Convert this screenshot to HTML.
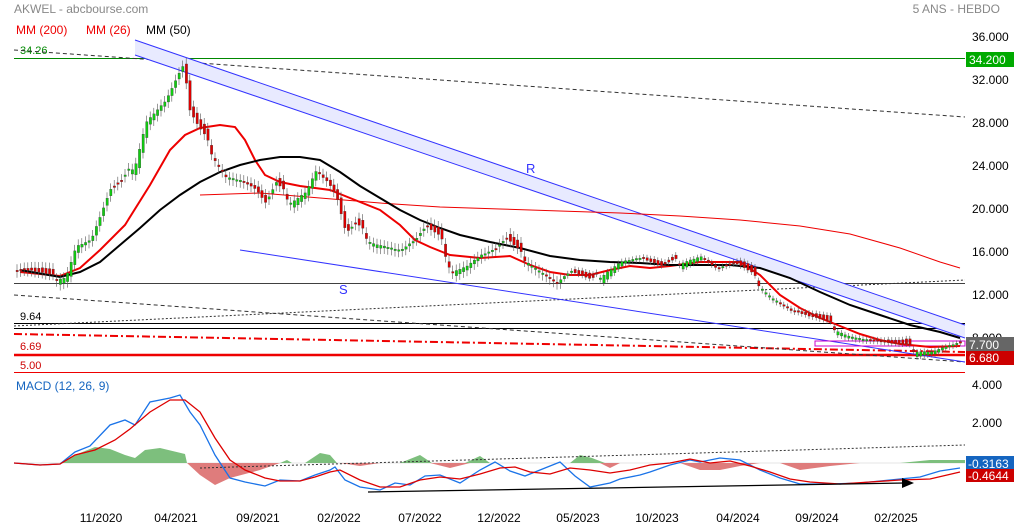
<!DOCTYPE html>
<html><head><meta charset="utf-8"><style>
html,body{margin:0;padding:0;background:#fff;width:1014px;height:528px;overflow:hidden;font-family:"Liberation Sans",sans-serif}
</style></head><body>
<svg id="s" width="1014" height="528" xmlns="http://www.w3.org/2000/svg" font-family="Liberation Sans, sans-serif">
<text x="14" y="13" font-size="12" fill="#888">AKWEL - abcbourse.com</text>
<text x="1000" y="13" font-size="12" fill="#888" text-anchor="end">5 ANS - HEBDO</text>
<text x="16" y="34" font-size="12" fill="#e00">MM (200)</text>
<text x="86" y="34" font-size="12" fill="#e00">MM (26)</text>
<text x="146" y="34" font-size="12" fill="#000">MM (50)</text>
<text x="20" y="54" font-size="11" fill="#080">34.26</text>
<g font-size="12" fill="#000">
<text x="972" y="41">36.000</text><text x="972" y="84">32.000</text><text x="972" y="127">28.000</text>
<text x="972" y="170">24.000</text><text x="972" y="213">20.000</text><text x="972" y="256">16.000</text>
<text x="972" y="299">12.000</text><text x="972" y="342">8.000</text>
<text x="972" y="389">4.000</text><text x="972" y="427">2.000</text>
</g>
<rect x="966" y="52" width="48" height="15" fill="#0a0"/><text x="969" y="64" font-size="12" fill="#fff">34.200</text>
<rect x="966" y="337" width="48" height="15" fill="#666"/><text x="969" y="349" font-size="12" fill="#fff">7.700</text>
<rect x="966" y="351" width="48" height="14" fill="#c00"/><text x="969" y="362" font-size="12" fill="#fff">6.680</text>
<rect x="966" y="456" width="48" height="15" fill="#1565c0"/><text x="968" y="468" font-size="12" fill="#fff">-0.3163</text>
<rect x="966" y="469" width="48" height="13" fill="#c00"/><text x="968" y="480" font-size="12" fill="#fff">-0.4644</text>
<line x1="14" y1="58.5" x2="965" y2="58.5" stroke="#080" stroke-width="1"/>
<line x1="14" y1="283.5" x2="965" y2="283.5" stroke="#000" stroke-width="0.8"/>
<text x="20" y="320" font-size="11">9.64</text>
<line x1="14" y1="323.5" x2="965" y2="323.5" stroke="#000"/>
<line x1="14" y1="328.5" x2="965" y2="328.5" stroke="#000"/>
<text x="20" y="350" font-size="11" fill="#c00">6.69</text>
<line x1="14" y1="355" x2="965" y2="355" stroke="#e00" stroke-width="2.5"/>
<text x="20" y="369" font-size="11" fill="#c00">5.00</text>
<line x1="14" y1="372.5" x2="965" y2="372.5" stroke="#e00"/>
<line x1="14" y1="334" x2="965" y2="352" stroke="#e00" stroke-width="2" stroke-dasharray="8,3,2,3"/>
<line x1="14" y1="50" x2="965" y2="117" stroke="#333" stroke-dasharray="4,3"/>
<line x1="14" y1="295" x2="965" y2="362" stroke="#333" stroke-dasharray="4,3"/>
<line x1="14" y1="326" x2="965" y2="280" stroke="#333" stroke-dasharray="2,2"/>
<polygon points="135,40 965,325 965,338 135,55" fill="#e8eaff"/>
<line x1="135" y1="40" x2="965" y2="325" stroke="#33f"/>
<line x1="135" y1="55" x2="965" y2="338" stroke="#33f"/>
<line x1="240" y1="250" x2="965" y2="362" stroke="#33f"/>
<text x="526" y="173" font-size="13" fill="#33f">R</text>
<text x="339" y="294" font-size="13" fill="#33f">S</text>
<rect x="815" y="341" width="150" height="5" fill="none" stroke="#c0c"/>
<polyline fill="none" stroke="#e00" stroke-width="1" points="200,195 260,193 320,198 380,203 440,207 500,209 560,211 620,213 680,216 740,220 800,226 850,234 900,248 940,262 960,268"/>
<polyline fill="none" stroke="#e00" stroke-width="2" points="20,272 60,276 80,268 100,250 125,225 150,185 170,150 185,135 200,128 220,125 235,127 245,140 255,160 265,175 280,182 300,186 330,190 355,200 380,210 400,225 415,240 430,247 450,255 480,258 510,256 530,265 550,272 570,275 590,275 610,270 630,266 650,268 670,266 700,262 720,262 740,262 760,275 780,295 800,308 820,318 840,326 860,334 880,340 900,344 930,347 960,346"/>
<polyline fill="none" stroke="#000" stroke-width="2" points="20,270 60,277 80,272 100,262 120,245 140,228 160,210 180,195 200,182 220,172 240,165 260,160 280,157 300,157 320,160 340,172 360,186 380,198 400,210 420,220 440,228 460,235 490,242 520,248 550,256 580,260 610,262 640,263 670,265 700,265 730,265 760,268 790,278 820,292 850,305 880,315 910,325 940,332 960,338"/>
<g id="c"></g>
<text x="16" y="390" font-size="12" fill="#1565c0">MACD (12, 26, 9)</text>
<line x1="14" y1="463" x2="965" y2="463" stroke="#ccc" stroke-width="0.5"/>
<path fill="#7dbf7d" d="M60,463 L75,455 L95,447 L110,449 L125,455 L135,458 L145,450 L160,448 L185,454 L187,463 Z M280,463 L287,460 L292,463Z M305,463 L320,453 L330,455 L337,463Z M400,463 L420,455 L432,463Z M465,463 L480,456 L490,463Z M570,463 L580,455 L592,458 L605,463Z M900,463 L930,460 L965,460 L965,463Z"/>
<path fill="#df7c7c" d="M187,463 L200,475 L215,485 L230,478 L260,470 L280,463Z M340,463 L360,466 L380,463Z M430,463 L450,468 L470,463Z M600,463 L610,468 L620,463Z M680,463 L700,470 L720,470 L740,466 L760,463Z M780,463 L800,470 L830,466 L860,463Z"/>
<line x1="200" y1="468" x2="965" y2="445" stroke="#333" stroke-dasharray="2,2"/>
<polyline fill="none" stroke="#1a73e8" stroke-width="1.3" points="14,463 40,465 60,464 75,452 90,446 110,425 125,420 135,425 150,402 170,398 180,395 190,412 200,425 215,455 230,478 245,482 265,486 280,480 300,481 315,475 330,470 335,467 345,480 360,487 380,490 395,483 410,485 425,476 440,475 460,483 480,470 495,462 510,471 525,476 545,468 560,462 575,476 590,487 610,483 620,479 640,475 650,472 670,465 690,460 700,462 720,458 740,460 760,470 780,478 800,484 830,484 860,483 890,480 920,477 940,471 960,468"/>
<polyline fill="none" stroke="#d00" stroke-width="1.3" points="14,463 40,465 60,464 75,455 95,450 115,440 130,429 150,412 170,400 185,400 200,412 215,438 230,460 245,470 265,478 280,481 300,481 315,477 330,472 340,470 360,480 380,487 400,487 420,480 440,477 460,479 480,474 500,468 515,467 530,472 550,474 570,468 590,470 610,473 630,470 650,465 670,463 690,459 710,463 730,461 750,466 770,472 790,479 810,482 840,484 870,482 900,480 930,479 960,472"/>
<line x1="368" y1="492" x2="905" y2="483" stroke="#000" stroke-width="1.2"/>
<polygon points="902,478 914,483 902,488" fill="#000"/>
<g font-size="12" fill="#000" text-anchor="middle">
<text x="101" y="522">11/2020</text><text x="176" y="522">04/2021</text><text x="258" y="522">09/2021</text>
<text x="339" y="522">02/2022</text><text x="420" y="522">07/2022</text><text x="499" y="522">12/2022</text>
<text x="578" y="522">05/2023</text><text x="657" y="522">10/2023</text><text x="738" y="522">04/2024</text>
<text x="817" y="522">09/2024</text><text x="896" y="522">02/2025</text>
</g>
</svg>
<script>
var p=[[14,270],[30,272],[50,278],[65,275],[75,245],[90,240],[100,215],[110,190],[120,185],[135,160],[145,120],[155,110],[165,100],[175,80],[183,65],[188,110],[195,125],[205,140],[215,160],[225,175],[240,180],[255,190],[265,205],[275,185],[290,200],[305,190],[315,170],[325,180],[335,195],[345,235],[355,225],[370,240],[385,245],[400,250],[415,240],[425,228],[440,240],[450,270],[465,265],[480,255],[495,250],[505,240],[520,255],[540,270],[555,283],[570,272],[590,282],[605,270],[620,260],[640,258],[660,268],[680,260],[700,255],[715,268],[735,265],[750,275],[770,295],[790,310],[810,318],[830,325],[850,335],[870,340],[890,345],[910,348],[930,350],[950,345],[960,343]];
function f(x){for(var i=1;i<p.length;i++)if(x<=p[i][0]){var a=p[i-1],b=p[i];return a[1]+(b[1]-a[1])*(x-a[0])/(b[0]-a[0]);}return 343;}
var g=document.getElementById('c'),h='',prev=f(16);
for(var x=16;x<962;x+=3.6){var y=f(x),j=(((x*7919)|0)%13-6)*1.4,o=prev+j*0.6,c=y+j*0.4;var up=c<o;var t=Math.min(o,c),b=Math.max(o,c);if(b-t<1.5)b=t+1.5;var w=x<560?6:3;
h+='<line x1="'+(x+1)+'" y1="'+(t-w)+'" x2="'+(x+1)+'" y2="'+(b+w)+'" stroke="#555" stroke-width="0.6"/>';
h+='<rect x="'+x+'" y="'+t+'" width="2.4" height="'+(b-t)+'" fill="'+(up?'#1c1':'#d00')+'" stroke="#333" stroke-width="0.3"/>';prev=c;}
g.innerHTML=h;
</script>
</body></html>
